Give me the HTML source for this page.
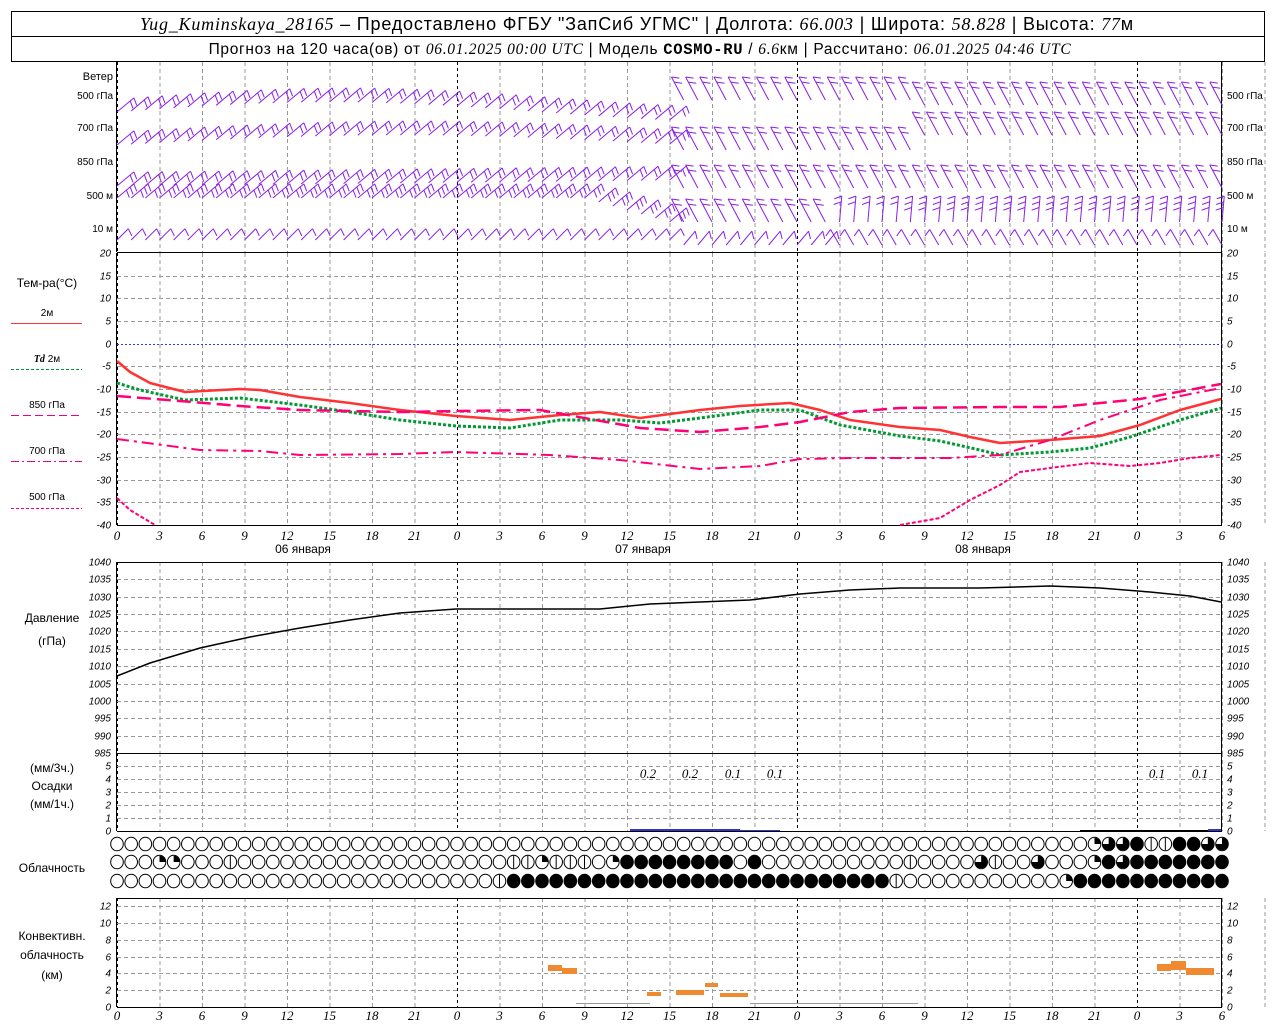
<!DOCTYPE html>
<html><head><meta charset="utf-8"><style>
html,body{margin:0;padding:0;background:#fff;width:1280px;height:1024px;overflow:hidden}
svg{display:block}
text{font-family:"Liberation Sans","DejaVu Sans",sans-serif;fill:#000}
.it{font-family:"Liberation Serif",serif;font-style:italic}
.ax{font-size:10px;font-style:italic}
</style></head><body>
<svg id="s" width="1280" height="1024" xmlns="http://www.w3.org/2000/svg">
<rect x="11.5" y="11.5" width="1253" height="50" fill="none" stroke="#000"/>
<line x1="11" y1="36.5" x2="1265" y2="36.5" stroke="#000"/>
<text x="637" y="30" font-size="18" text-anchor="middle" letter-spacing="0.8"><tspan class="it">Yug_Kuminskaya_28165</tspan> – Предоставлено ФГБУ "ЗапСиб УГМС" | Долгота: <tspan class="it">66.003</tspan> | Широта: <tspan class="it">58.828</tspan> | Высота: <tspan class="it">77</tspan>м</text>
<text x="640" y="54" font-size="15.5" text-anchor="middle" letter-spacing="0.7">Прогноз на 120 часа(ов) от <tspan class="it">06.01.2025 00:00 UTC</tspan>  | Модель <tspan font-weight="bold" font-family="Liberation Mono">COSMO-RU</tspan> / <tspan class="it">6.6</tspan>км | Рассчитано: <tspan class="it">06.01.2025 04:46 UTC</tspan></text>
<g id="g"></g>
</svg>
<script>
var g=document.getElementById('g'),h='';
function X(hr){return 117+hr*340/24;}
function L(x1,y1,x2,y2,c,w,d){h+='<line x1="'+x1+'" y1="'+y1+'" x2="'+x2+'" y2="'+y2+'" stroke="'+(c||'#000')+'" stroke-width="'+(w||1)+'"'+(d?' stroke-dasharray="'+d+'"':'')+'/>';}
function T(x,y,s,sz,a,cls){h+='<text x="'+x+'" y="'+y+'" font-size="'+(sz||11)+'" text-anchor="'+(a||'start')+'"'+(cls?' class="'+cls+'"':'')+'>'+s+'</text>';}
function P(pts,c,w,d){h+='<polyline fill="none" stroke-linejoin="round" points="'+pts.map(function(p){return p.join(',')}).join(' ')+'" stroke="'+c+'" stroke-width="'+w+'"'+(d?' stroke-dasharray="'+d+'"':'')+'/>';}
var panels=[[62,252],[253,525],[562,753],[753,831],[898,1007]];
panels.forEach(function(p){for(var hr=0;hr<=102;hr+=3){var x=X(hr)+0.5;if(hr%24==0)L(x,p[0],x,p[1],'#000',1,'3,3');else L(x,p[0],x,p[1],'#999',1,'4,3');}
L(116.5,p[0],116.5,p[1],'#000');L(1221.5,p[0],1221.5,p[1],'#000');});
L(117,252.5,1222,252.5,'#000');L(117,753.5,1222,753.5,'#000');L(117,831.5,1222,831.5,'#000');L(117,562.5,1222,562.5,'#000');L(117,898.5,1222,898.5,'#000');L(117,525.5,1222,525.5,'#000');L(117,1007.5,1222,1007.5,'#000');
for(var v=20;v>=-40;v-=5){var y=253+(20-v)*272/60;y=Math.round(y)+0.5;if(v==0)L(117,y,1222,y,'#33f',1,'2,2');else if(v!=20&&v!=-40)L(117,y,1222,y,'#999',1,'4,3');
T(111,y+3,v,9,'end','ax');T(1227,y+3,v,9,'start','ax');}
for(var i=0;i<=11;i++){var lab=[1040,1035,1030,1025,1020,1015,1010,1005,1000,995,990,985][i];var y=Math.round(562+i*191/11)+0.5;if(i>0&&i<11)L(117,y,1222,y,'#999',1,'4,3');T(111,y+3,lab,9,'end','ax');T(1227,y+3,lab,9,'start','ax');}
for(var v=0;v<=5;v++){var y=Math.round(831-v*13)+0.5;if(v>0)L(117,y,1222,y,'#999',1,'4,3');T(111,y+3,v,9,'end','ax');T(1227,y+3,v,9,'start','ax');}
for(var v=0;v<=12;v+=2){var y=Math.round(1007-v*8.4)+0.5;if(v>0)L(117,y,1222,y,'#999',1,'4,3');T(111,y+3,v,9,'end','ax');T(1227,y+3,v,9,'start','ax');}
for(var hr=0;hr<=78;hr+=3){var s=hr%24;T(X(hr),540,s,13,'middle','it');T(X(hr),1020,s,13,'middle','it');}
T(303,553,'06 января',12,'middle');T(643,553,'07 января',12,'middle');T(983,553,'08 января',12,'middle');
T(113,80,'Ветер',11,'end');
[['500 гПа',99],['700 гПа',131],['850 гПа',165],['500 м',199],['10   м',232]].forEach(function(a){T(113,a[1],a[0],10,'end');T(1227,a[1],a[0],10,'start');});
T(47,287,'Тем-ра(°C)',12,'middle');
T(47,316,'2м',10,'middle');L(11,323.5,82,323.5,'#f33',1);
T(47,362,'<tspan class="it" font-weight="bold">Td</tspan>  2м',10,'middle');L(11,369.5,82,369.5,'#093',1,'3,2');
T(47,408,'850 гПа',10,'middle');L(11,415.5,82,415.5,'#e08',1,'8,4');
T(47,454,'700 гПа',10,'middle');L(11,461.5,82,461.5,'#e08',1,'8,3,2,3');
T(47,500,'500 гПа',10,'middle');L(11,508.5,82,508.5,'#e08',1,'3,2');
T(52,622,'Давление',12,'middle');T(52,645,'(гПа)',12,'middle');
T(52,772,'(мм/3ч.)',12,'middle');T(52,790,'Осадки',12,'middle');T(52,808,'(мм/1ч.)',12,'middle');
T(52,872,'Облачность',12,'middle');
T(52,940,'Конвективн.',12,'middle');T(52,959,'облачность',12,'middle');T(52,979,'(км)',12,'middle');
P([[117,361],[130,372],[150,383],[185,392],[240,389],[260,390],[300,397],[350,403],[400,410],[456,416],[510,420],[560,415],[600,412],[640,418],[700,410],[740,406],[790,403],[820,410],[850,420],[900,427],[940,430],[970,437],[1000,443],[1050,440],[1100,436],[1140,425],[1180,410],[1221,399]],'#f33',2.5);
P([[117,383],[140,390],[185,400],[240,398],[300,405],[350,412],[400,420],[456,426],[510,428],[560,420],[620,420],[660,423],[700,418],[760,410],[800,410],[840,425],[900,436],[940,441],[980,450],[1000,455],[1050,452],[1090,448],[1130,437],[1180,420],[1221,408]],'#093',3,'3,2');
P([[117,396],[180,401],[240,406],[300,410],[400,412],[456,411],[540,410],[640,428],[700,432],[760,427],[800,422],[850,412],[900,408],[1000,407],[1060,407],[1140,399],[1221,384]],'#f07',2.5,'14,6');
P([[117,439],[200,450],[260,451],[300,455],[400,454],[456,452],[550,455],[620,460],[700,469],[760,466],[800,459],[850,458],[950,458],[1000,455],[1050,440],[1100,420],[1160,400],[1221,388]],'#f07',2,'12,5,3,5');
P([[117,498],[130,510],[155,525]],'#f07',2,'4,2');
P([[900,525],[940,518],[970,500],[1000,485],[1020,472],[1050,468],[1090,463],[1130,466],[1160,463],[1190,458],[1221,455]],'#f07',2,'4,2');
P([[117,676],[150,663],[200,648],[250,637],[300,628],[350,620],[400,613],[456,609],[600,609],[650,604],[750,600],[800,594],[850,590],[900,588],[980,588],[1050,586],[1100,588],[1150,592],[1190,596],[1221,602]],'#000',1.5);
L(630,830,740,830,'#33c',2);L(740,830.5,780,830.5,'#33c',1);L(1080,830.5,1208,830.5,'#000',1);L(1208,830,1221,830,'#33c',2);
[['0.2',648],['0.2',690],['0.1',733],['0.1',775],['0.1',1157],['0.1',1200]].forEach(function(a){T(a[1],778,a[0],13,'middle','it');});
function cl(x,y,t){var r=6.3;if(t==0)h+='<ellipse cx="'+x+'" cy="'+y+'" rx="'+r+'" ry="'+(r+0.5)+'" fill="#fff" stroke="#000"/>';
else if(t==4)h+='<ellipse cx="'+x+'" cy="'+y+'" rx="'+r+'" ry="'+(r+0.5)+'" fill="#000" stroke="#000"/>';
else{h+='<ellipse cx="'+x+'" cy="'+y+'" rx="'+r+'" ry="'+(r+0.5)+'" fill="#fff" stroke="#000"/>';
if(t==1)L(x,y-r,x,y+r);
if(t==2)h+='<path d="M'+x+','+y+' L'+x+','+(y-r)+' A'+r+','+r+' 0 0 1 '+(x+r)+','+y+' Z" fill="#000"/>';
if(t==3)h+='<path d="M'+x+','+(y-r)+' A'+r+','+r+' 0 1 1 '+(x-r)+','+y+' L'+x+','+y+' Z" fill="#000"/>';}}
for(var i=0;i<=78;i++){var x=X(i);
var a=0,b=0,c=0;
if(i>=69){a=[2,3,3,4,1,1,4,4,3,3][i-69]||3;}
if(i==3||i==4)b=2;if(i==8)b=1;if(i==28||i==29||i==30||i==31||i==32||i==33)b=(i==30?2:1);if(i==35)b=2;
if(i>=36&&i<=45)b=(i==44?0:4);if(i==56)b=1;if(i==61)b=3;if(i==62)b=1;if(i==65)b=3;if(i>=70)b=(i==71?3:4);if(i==69)b=2;
if(i==27)c=1;if(i>=28&&i<=54)c=4;if(i==55)c=1;if(i==67)c=2;if(i>=68)c=4;
cl(x,844,a);cl(x,862,b);cl(x,881,c);}
[[548,965,14,6],[562,968,15,6],[647,992,14,4],[676,990,28,5],[705,983,13,4],[720,993,28,4],[1157,964,14,7],[1171,961,15,9],[1186,968,28,7]].forEach(function(r){h+='<rect x="'+r[0]+'" y="'+r[1]+'" width="'+r[2]+'" height="'+r[3]+'" fill="#f08a30"/>';});
L(576,1003.5,650,1003.5,'#999');L(750,1003.5,918,1003.5,'#999');
var col='#8a1ee6';
function barb(x,y,ang,n,len,fd){var a=ang*Math.PI/180;var tx=x+len*Math.sin(a),ty=y-len*Math.cos(a);L(x,y,tx,ty,col,1);
for(var k=0;k<n;k++){var f=1-k*0.22;var px=x+len*f*Math.sin(a),py=y-len*f*Math.cos(a);var fa=a+fd;L(px,py,px+8*Math.sin(fa),py-8*Math.cos(fa),col,1);}}
var rows=[110,143,177,212,238];
for(var i=0;i<=78;i++){var x=X(i);
for(var r=0;r<5;r++){var y,ang,n,len=(r==4?16:22),fd;
if(i<40){ang=(r==4?45:50);n=(r==4?1:(r==3?3:2));fd=1.9;
if(r==0)y=112-Math.sin(i/30*Math.PI)*10;if(r==1)y=145-Math.sin(i/40*Math.PI)*10;if(r==2)y=186-i*0.15;if(r==3)y=198;if(r==4)y=240;
if(i>=33&&r==3)y=198+(i-33)*4;}
else{ang=(r>=3&&i>50)?5:-28;n=(i>55&&r>=3)?3:2;fd=(r>=3&&i>50)?-2.0:2.2;len=26;
y=[100,150,188,222,245][r];if(r==0&&i>56)y=105;if(r==1&&i>56)y=135;if(r==4){ang=i>50?-30:40;n=1;len=18;}}
barb(x,y,ang,n,len,fd);}}
g.innerHTML=h;
</script>
</body></html>
